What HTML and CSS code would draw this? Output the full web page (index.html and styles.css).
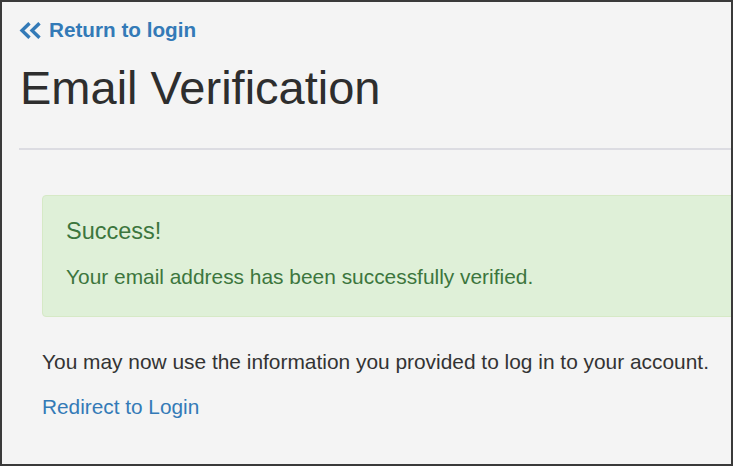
FILE: index.html
```html
<!DOCTYPE html>
<html lang="en">
<head>
<meta charset="utf-8">
<title>Email Verification</title>
<link rel="stylesheet" href="styles.css">
</head>
<body>
<div class="frame">
  <div class="page">
    <a class="back" href="#">
      <svg class="back-icon" width="23" height="17" viewBox="0 0 23 17" aria-hidden="true">
        <path d="M10.5 1.2 L3 8.5 L10.5 15.8 M20.5 1.2 L13 8.5 L20.5 15.8" fill="none" stroke="#337ab7" stroke-width="3.4" stroke-linejoin="miter"/>
      </svg>
      <span>Return to login</span>
    </a>
    <h1 class="title">Email Verification</h1>
    <hr class="rule">
    <div class="content">
      <div class="alert">
        <h4 class="alert-title">Success!</h4>
        <p class="alert-text">Your email address has been successfully verified.</p>
      </div>
      <p class="info">You may now use the information you provided to log in to your account.</p>
      <a class="redirect" href="#">Redirect to Login</a>
    </div>
  </div>
</div>
</body>
</html>
```

FILE: styles.css
```css
* { box-sizing: border-box; }

html, body {
  margin: 0;
  padding: 0;
  background: #f4f4f4;
}

.frame {
  width: 733px;
  height: 466px;
  border: 2px solid #3a3a3a;
  background: #f4f4f4;
  overflow: hidden;
  font-family: "Liberation Sans", Arial, sans-serif;
  color: #333333;
}

.page {
  width: 960px;
  padding-left: 17px;
  padding-top: 17px;
}

.back {
  display: flex;
  align-items: center;
  gap: 7px;
  height: 22px;
  color: #337ab7;
  text-decoration: none;
  font-weight: bold;
  font-size: 20.7px;
  line-height: 22px;
  width: max-content;
}

.back-icon {
  display: block;
  margin-top: 1px;
}

.title {
  margin: 21px 0 0 1px;
  font-size: 47px;
  line-height: 52px;
  font-weight: normal;
  color: #2e2e2e;
}

.rule {
  margin: 34px 0 0 0;
  border: 0;
  height: 2px;
  background: #dcdce2;
}

.content {
  padding-left: 23px;
}

.alert {
  margin-top: 45px;
  height: 122px;
  background: #dff0d8;
  border: 1px solid #d6e9c6;
  border-radius: 4px;
  padding: 22px 23px 0 23px;
  color: #3c763d;
}

.alert-title {
  margin: 0;
  font-size: 23.5px;
  line-height: 26px;
  font-weight: normal;
}

.alert-text {
  margin: 22px 0 0 0;
  font-size: 20.9px;
  line-height: 22px;
}

.info {
  margin: 34px 0 0 0;
  font-size: 20.9px;
  line-height: 22px;
  color: #333333;
}

.redirect {
  display: block;
  margin-top: 23px;
  font-size: 20.8px;
  line-height: 22px;
  color: #337ab7;
  text-decoration: none;
  width: max-content;
}
```
